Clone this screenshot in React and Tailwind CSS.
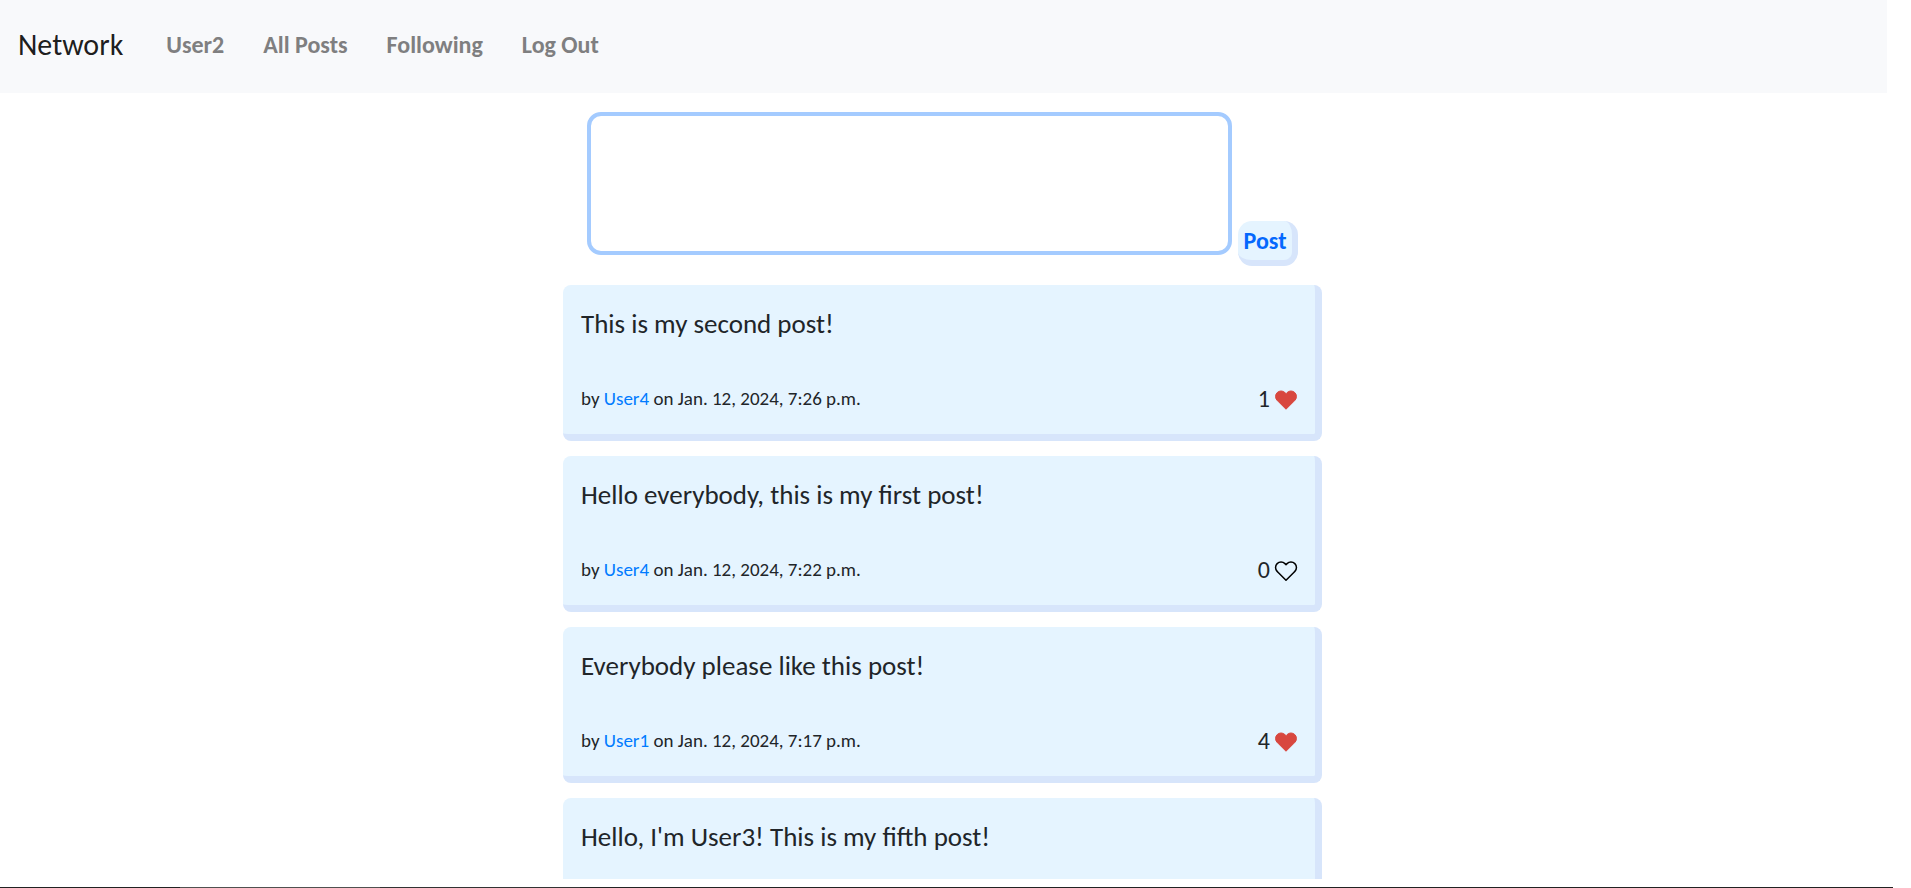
const posts = [
  { text: "This is my second post!", user: "User4", date: "Jan. 12, 2024, 7:26 p.m.", likes: 1, liked: true },
  { text: "Hello everybody, this is my first post!", user: "User4", date: "Jan. 12, 2024, 7:22 p.m.", likes: 0, liked: false },
  { text: "Everybody please like this post!", user: "User1", date: "Jan. 12, 2024, 7:17 p.m.", likes: 4, liked: true },
  { text: "Hello, I'm User3! This is my fifth post!" },
];

const links = ["User2", "All Posts", "Following", "Log Out"];

function Heart({ liked }) {
  return (
    <svg viewBox="0 0 24 22" className="h-[22px] w-6" aria-hidden="true">
      <path
        d="M20.84 4.61a5.5 5.5 0 0 0-7.78 0L12 5.67l-1.060-1.060a5.5 5.5 0 0 0-7.780 7.780l1.060 1.060L12 21.230l7.780-7.780 1.060-1.060a5.5 5.5 0 0 0 0-7.780z"
        fill={liked ? "#d8473f" : "none"}
        stroke={liked ? "#d8473f" : "#000"}
        strokeWidth={liked ? "1" : "1.5"}
        strokeLinejoin="round"
      />
    </svg>
  );
}

function Post({ post }) {
  return (
    <article className="flex h-[156px] shrink-0 flex-col justify-between rounded-lg border-r-[7px] border-b-[7px] border-[#d7e5fb] bg-[#e5f4ff] pt-[19px] pr-[17px] pb-[19px] pl-[18px]">
      <p className="text-[27px] leading-10">{post.text}</p>
      {post.user && (
        <div className="flex items-center justify-between">
          <p className="text-[19px] leading-8">
            by <a href="#" className="text-[#007bff]">{post.user}</a> on {post.date}
          </p>
          <button type="button" aria-label="Like" className="flex items-center gap-1 text-[24px] leading-8">
            {post.likes}
            <Heart liked={post.liked} />
          </button>
        </div>
      )}
    </article>
  );
}

export default function App() {
  return (
    <div className="flex h-screen flex-col bg-white font-['Carlito','Lato',sans-serif] text-[#212529]">
      <div className="min-h-0 flex-1 overflow-hidden pr-6">
        <nav className="flex h-[93px] items-center gap-[39px] bg-[#f8f9fb] pb-1 pl-[18px]">
          <a href="#" className="mr-1 text-[30px] text-black/90">Network</a>
          {links.map((l) => (
            <a key={l} href="#" className="text-[24px] font-bold text-[#7f7f80]">{l}</a>
          ))}
        </nav>
        <main className="mx-auto w-full max-w-[761px] pr-[2px]">
          <form className="flex items-end gap-[6px] pt-[19px] pl-6">
            <textarea aria-label="New post" className="mb-[11px] h-[143px] w-[645px] resize-none rounded-[14px] border-4 border-[#a4cbff] bg-white p-2 text-[24px] outline-none" />
            <button type="button" className="h-[45px] w-[60px] rounded-[14px] border-r-[6px] border-b-[6px] border-[#d7e5fb] bg-[#e5f4ff] text-[24px] font-bold text-[#0568fd]">Post</button>
          </form>
          <section className="mt-[19px] flex flex-col gap-[15px]">
            {posts.map((p) => (
              <Post key={p.text} post={p} />
            ))}
          </section>
        </main>
      </div>
      <footer className="mt-2 mr-[18px] flex h-px shrink-0 bg-[#222]">
        <span className="ml-[180px] w-[200px] bg-[#505050]" />
        <span className="w-[200px] bg-[#333]" />
      </footer>
    </div>
  );
}
